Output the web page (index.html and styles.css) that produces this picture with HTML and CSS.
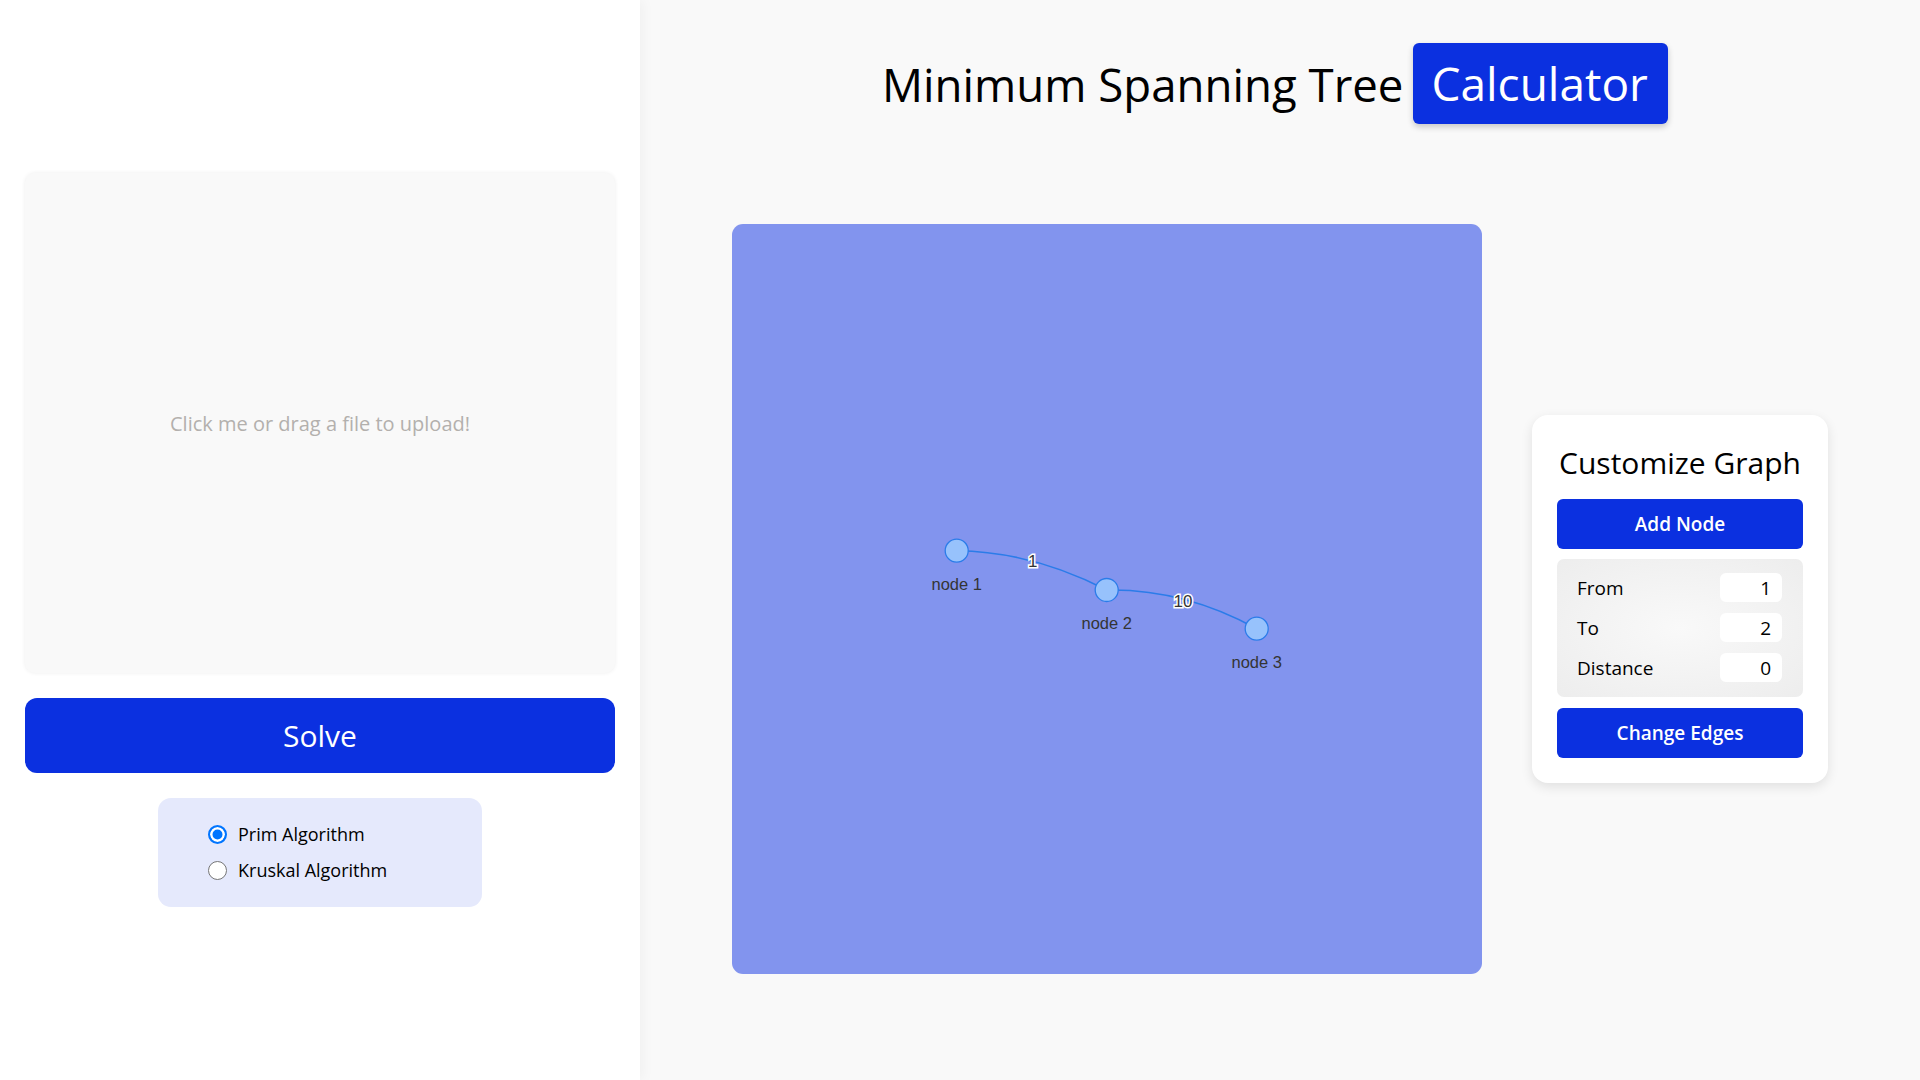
FILE: index.html
```html
<!DOCTYPE html>
<html lang="en">
<head>
<meta charset="utf-8">
<title>Minimum Spanning Tree Calculator</title>
<link rel="stylesheet" href="styles.css">
</head>
<body>
<div class="app">
  <aside class="side">
    <div class="upload">Click me or drag a file to upload!</div>
    <button class="solve">Solve</button>
    <div class="algos">
      <label class="algo"><input type="radio" name="algo" checked><span>Prim Algorithm</span></label>
      <label class="algo"><input type="radio" name="algo"><span>Kruskal Algorithm</span></label>
    </div>
  </aside>
  <main class="main">
    <header class="title">
      <h1>Minimum Spanning Tree</h1>
      <span class="badge">Calculator</span>
    </header>
    <section class="workspace">
      <div class="canvas">
        <svg width="750" height="750" viewBox="0 0 750 750">
          <path class="edge" d="M224.7 326.7 Q300.3 327.6 374.7 366"/>
          <path class="edge" d="M374.7 366 Q452.3 364.7 524.7 404.7"/>
          <text class="elabel" x="300.7" y="337.7">1</text>
          <text class="elabel" x="451" y="377.7">10</text>
          <circle class="node" cx="224.7" cy="326.7" r="11.5"/>
          <circle class="node" cx="374.7" cy="366" r="11.5"/>
          <circle class="node" cx="524.7" cy="404.7" r="11.5"/>
          <text class="nlabel" x="224.7" y="365.7">node 1</text>
          <text class="nlabel" x="374.7" y="405">node 2</text>
          <text class="nlabel" x="524.7" y="443.7">node 3</text>
        </svg>
      </div>
      <div class="card">
        <h2>Customize Graph</h2>
        <button class="btn">Add Node</button>
        <div class="form">
          <div class="row"><span>From</span><input class="num" value="1"></div>
          <div class="row"><span>To</span><input class="num" value="2"></div>
          <div class="row"><span>Distance</span><input class="num" value="0"></div>
        </div>
        <button class="btn">Change Edges</button>
      </div>
    </section>
  </main>
</div>
</body>
</html>
```

FILE: styles.css
```css
* { box-sizing: border-box; }
html, body { margin: 0; padding: 0; }
body {
  font-family: "Open Sans", "Noto Sans", sans-serif;
  color: #000;
  background: #f9f9f9;
}
.app {
  display: flex;
  width: 1920px;
  height: 1080px;
}
.side {
  width: 640px;
  flex: none;
  background: #fff;
  display: flex;
  flex-direction: column;
  align-items: center;
  justify-content: center;
  gap: 25px;
  box-shadow: 3px 0 12px rgba(0,0,0,0.04);
  position: relative;
  z-index: 1;
}
.upload {
  width: 590px;
  height: 500px;
  background: #f9f9f9;
  border-radius: 10px;
  box-shadow: 0 0 4px rgba(0,0,0,0.07);
  display: flex;
  align-items: center;
  justify-content: center;
  color: #b3b0ad;
  font-size: 20px;
}
.solve {
  width: 590px;
  height: 75px;
  border: none;
  border-radius: 12px;
  background: #0b30e0;
  color: #fff;
  font-family: inherit;
  font-size: 30px;
  font-weight: 500;
}
.algos {
  width: 324px;
  height: 109px;
  background: #e5e9fc;
  border-radius: 13px;
  padding: 24px 0 0 50px;
  display: flex;
  flex-direction: column;
  gap: 12px;
}
.algo {
  display: flex;
  align-items: center;
  gap: 11px;
  font-size: 18px;
  line-height: 24px;
}
.algo input {
  appearance: none;
  -webkit-appearance: none;
  width: 19px;
  height: 19px;
  margin: 0;
  border-radius: 50%;
  border: 1.5px solid #767676;
  background: #fff;
}
.algo input:checked {
  border: 2px solid #0075ff;
  background: #0075ff;
  box-shadow: inset 0 0 0 2.5px #fff;
}
.main {
  flex: 1;
  padding-top: 43px;
  display: flex;
  flex-direction: column;
  align-items: center;
}
.title {
  display: flex;
  align-items: center;
  gap: 10px;
  margin-right: 10px;
}
.title h1 {
  margin: 0;
  font-size: 45.6px;
  font-weight: 400;
  line-height: 62px;
}
.badge {
  background: #0b30e0;
  color: #fff;
  font-size: 46px;
  line-height: 63px;
  padding: 9px 20px 9px 18px;
  border-radius: 6px;
  box-shadow: 0 3px 6px rgba(0,0,0,0.2);
}
.workspace {
  margin-top: 100px;
  display: flex;
  align-items: center;
  gap: 50px;
}
.canvas {
  width: 750px;
  height: 750px;
  background: #8294ee;
  border-radius: 11px;
  overflow: hidden;
}
.canvas svg { display: block; }
.edge {
  fill: none;
  stroke: #2b7ce9;
  stroke-width: 1.6;
}
.node {
  fill: #97c2fc;
  stroke: #2b7ce9;
  stroke-width: 1.3;
}
.nlabel {
  font-family: "Liberation Sans", Arial, sans-serif;
  font-size: 16.5px;
  fill: #343434;
  text-anchor: middle;
}
.elabel {
  font-family: "Liberation Sans", Arial, sans-serif;
  font-size: 17px;
  fill: #343434;
  stroke: #fff;
  stroke-width: 3px;
  paint-order: stroke;
  text-anchor: middle;
  dominant-baseline: central;
}
.card {
  width: 296px;
  background: #fff;
  border-radius: 16px;
  padding: 25px;
  box-shadow: 0 4px 12px rgba(0,0,0,0.1);
  display: flex;
  flex-direction: column;
}
.card h2 {
  margin: 2px 0 16px;
  font-size: 30px;
  font-weight: 400;
  line-height: 41px;
  text-align: center;
}
.btn {
  height: 50px;
  border: none;
  border-radius: 6px;
  background: #0b30e0;
  color: #fff;
  font-family: inherit;
  font-size: 19px;
  font-weight: 600;
}
.form {
  margin: 10px 0 11px;
  padding: 14px 21px 15px 20px;
  border-radius: 7px;
  background: radial-gradient(ellipse at center, #f9f9f9 0%, #ededed 100%);
  display: flex;
  flex-direction: column;
  gap: 11px;
}
.row {
  display: flex;
  align-items: center;
  justify-content: space-between;
  height: 29px;
  font-size: 19px;
}
.num {
  width: 62px;
  height: 29px;
  border: none;
  border-radius: 6px;
  background: #fff;
  font-family: inherit;
  font-size: 19px;
  text-align: right;
  padding: 0 11px;
  color: #000;
}
```
